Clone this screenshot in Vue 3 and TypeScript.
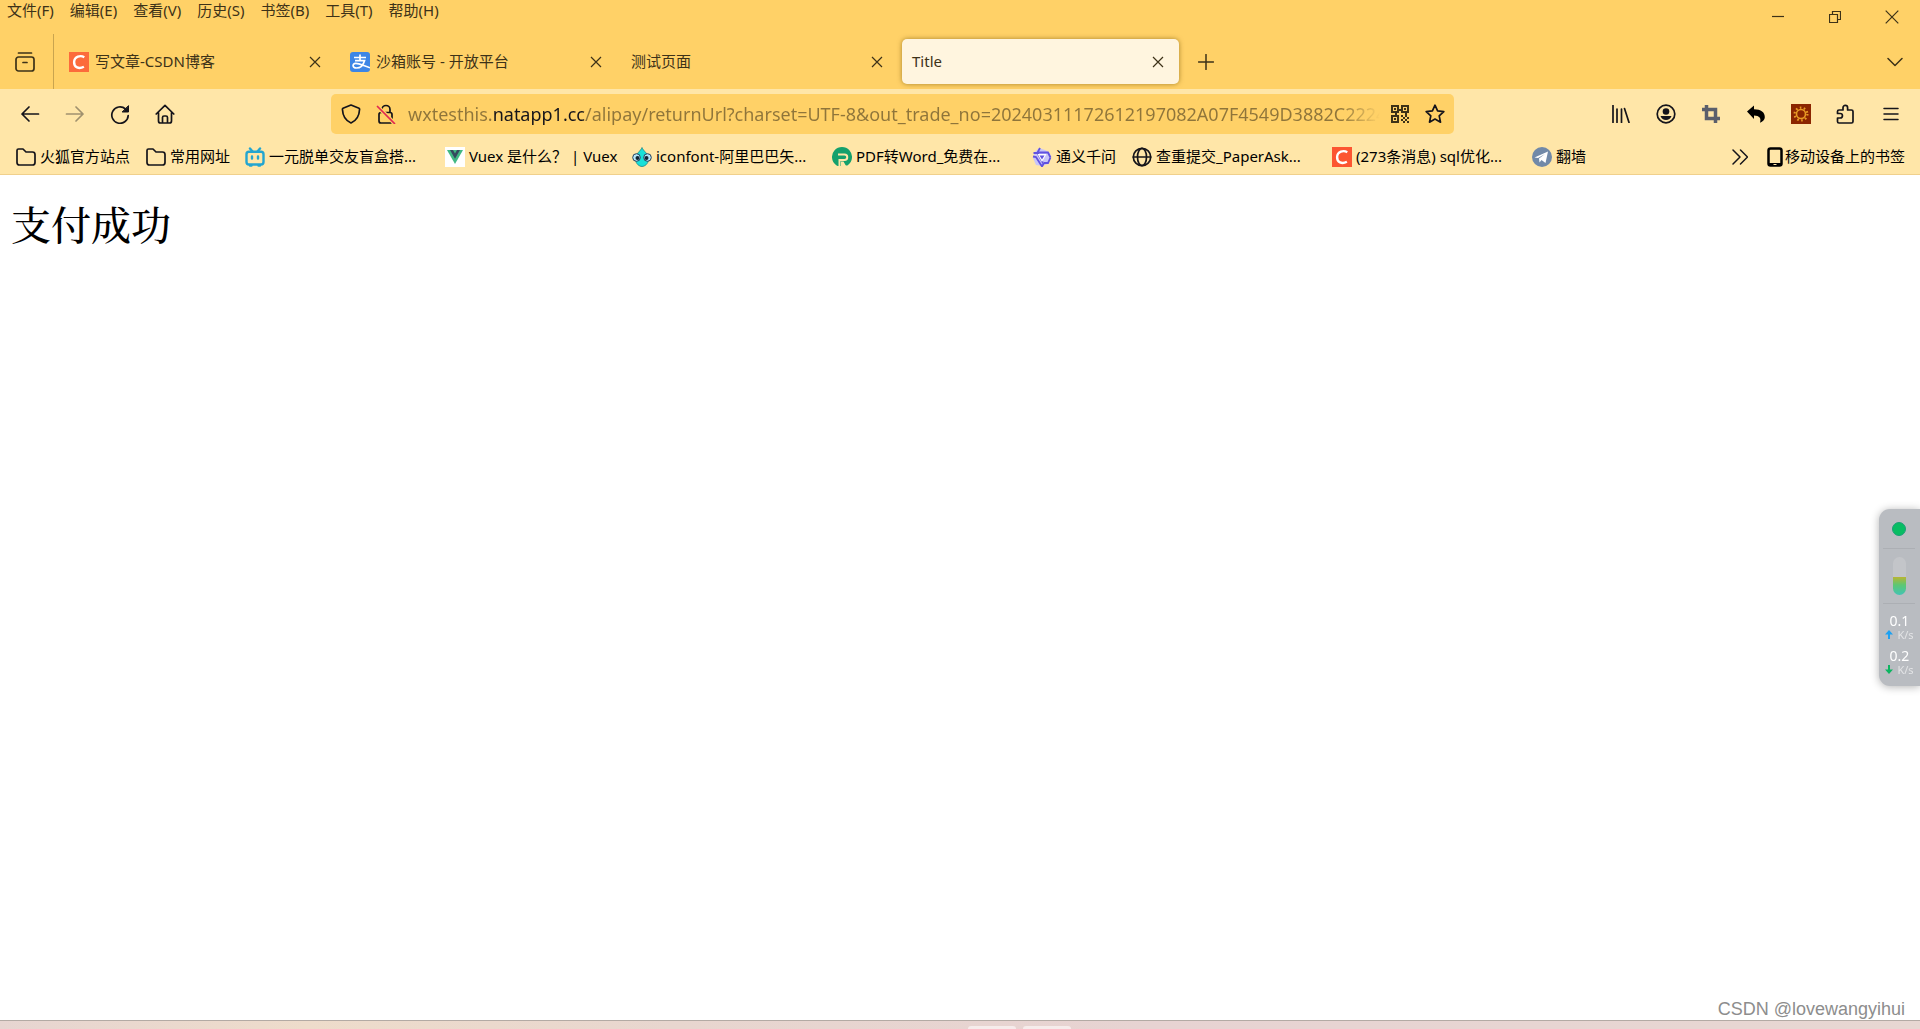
<script setup lang="ts">
import { ref } from 'vue'

interface Tab {
  title: string
  icon?: 'csdn' | 'alipay'
}

interface Bookmark {
  label: string
  icon: string
  width: number
}

const menus: string[] = ['文件(F)', '编辑(E)', '查看(V)', '历史(S)', '书签(B)', '工具(T)', '帮助(H)']

const tabs: Tab[] = [
  { title: '写文章-CSDN博客', icon: 'csdn' },
  { title: '沙箱账号 - 开放平台', icon: 'alipay' },
  { title: '测试页面' },
  { title: 'Title' },
]
const activeTab = ref(3)

const address = ref(
  'wxtesthis.natapp1.cc/alipay/returnUrl?charset=UTF-8&out_trade_no=20240311172612197082A07F4549D3882C2224F',
)

const bookmarks: Bookmark[] = [
  { label: '火狐官方站点', icon: 'folder', width: 130 },
  { label: '常用网址', icon: 'folder', width: 99 },
  { label: '一元脱单交友盲盒搭...', icon: 'bili', width: 200 },
  { label: 'Vuex 是什么？ | Vuex', icon: 'vue', width: 187 },
  { label: 'iconfont-阿里巴巴矢...', icon: 'iconfont', width: 200 },
  { label: 'PDF转Word_免费在...', icon: 'pdf', width: 200 },
  { label: '通义千问', icon: 'tongyi', width: 100 },
  { label: '查重提交_PaperAsk...', icon: 'globe', width: 200 },
  { label: '(273条消息) sql优化...', icon: 'csdn', width: 200 },
  { label: '翻墙', icon: 'plane', width: 80 },
]
</script>

<template>
  <div class="browser">
    <header class="chrome">
      <div class="titlebar">
        <nav class="menus" aria-label="菜单栏">
          <button v-for="m in menus" :key="m" class="menu">{{ m }}</button>
        </nav>
        <div class="window-controls">
          <button aria-label="最小化">
            <svg width="12" height="12" viewBox="0 0 12 12"><path d="M0 5.5h12" /></svg>
          </button>
          <button aria-label="还原">
            <svg width="12" height="12" viewBox="0 0 12 12"><path d="M.5 3.5h8v8h-8zM3.500 3.500v-3h8v8h-3" /></svg>
          </button>
          <button aria-label="关闭">
            <svg width="14" height="14" viewBox="0 0 14 14"><path d="M.7.7l12.600 12.600M13.300.7L.7 13.300" /></svg>
          </button>
        </div>
      </div>

      <div class="tabstrip">
        <button class="view-button" aria-label="最近浏览">
          <svg width="20" height="20" viewBox="0 0 20 20" class="line">
            <path d="M3.500 1h13" /><rect x="1" y="5" width="18" height="14" rx="2.500" /><path d="M8 10.500h4" />
          </svg>
        </button>
        <div class="tabs" role="tablist">
          <div
            v-for="(t, i) in tabs"
            :key="t.title"
            class="tab"
            :class="{ active: i === activeTab }"
            role="tab"
            :aria-selected="i === activeTab"
            @click="activeTab = i"
          >
            <svg v-if="t.icon === 'csdn'" class="fav" viewBox="0 0 20 20">
              <path fill="#fc6b3b" d="M0 0h20v20H0z" />
              <path fill="none" stroke="#fff" stroke-width="2.400" d="M15.300 5.200C11.500 3 5.400 4.300 5.100 10c-.2 5.500 4.800 7.300 9.800 4.800" />
            </svg>
            <svg v-else-if="t.icon === 'alipay'" class="fav" viewBox="0 0 20 20">
              <rect width="20" height="20" rx="3" fill="#3d86e6" />
              <path fill="none" stroke="#fff" stroke-width="1.700" d="M4 5.500h12M10 2.500v6M5 8.700h9.500c-1 3.500-3.500 7.300-8 7.300-4.500 0-4.300-4.500-.8-4.700 3.800-.1 8.300 2.700 14.300 4.500" />
            </svg>
            <span class="tab-title">{{ t.title }}</span>
            <button class="tab-close" aria-label="关闭标签页">
              <svg width="12" height="12" viewBox="0 0 12 12"><path d="M1 1l10 10M11 1L1 11" /></svg>
            </button>
          </div>
        </div>
        <button class="new-tab" aria-label="新建标签页">
          <svg width="16" height="16" viewBox="0 0 16 16" class="line thin"><path d="M8 .5v15M.5 8h15" /></svg>
        </button>
        <button class="all-tabs" aria-label="列出所有标签页">
          <svg width="16" height="10" viewBox="0 0 16 10" class="line thin"><path d="M1 1.500l7 7 7-7" /></svg>
        </button>
      </div>

      <div class="toolbar">
        <div class="tools">
          <button aria-label="后退">
            <svg width="20" height="20" viewBox="0 0 20 20" class="line"><path d="M18.500 10H2M9 3l-7 7 7 7" /></svg>
          </button>
          <button aria-label="前进" class="disabled">
            <svg width="20" height="20" viewBox="0 0 20 20" class="line"><path d="M1.500 10H18M11 3l7 7-7 7" /></svg>
          </button>
          <button aria-label="刷新">
            <svg width="20" height="20" viewBox="0 0 20 20" class="line">
              <path d="M18.200 11.500A8.200 8.200 0 1 1 15.500 5" /><path d="M18.500 2v6h-6z" fill="#15141a" stroke-width="1" />
            </svg>
          </button>
          <button aria-label="主页">
            <svg width="20" height="20" viewBox="0 0 20 20" class="line">
              <path d="M1.200 10L10 1.300 18.800 10M3.500 8.500V17q0 2 2 2h9q2 0 2-2V8.500M7.500 19v-5.500q0-1.500 1.500-1.500h2q1.500 0 1.500 1.500V19" />
            </svg>
          </button>
        </div>

        <div class="urlbar">
          <button aria-label="跟踪保护">
            <svg width="20" height="20" viewBox="0 0 20 20" class="line">
              <path d="M10 1l8 3.300q.6.300.6 1C18.300 11 16 16.500 10 19 4 16.500 1.700 11 1.400 5.300q0-.7.6-1z" />
            </svg>
          </button>
          <button aria-label="连接不安全">
            <svg width="20" height="20" viewBox="0 0 20 20" class="line">
              <path d="M6 8V5.500a4 4 0 0 1 8 0V8M5 8.500h9q2 0 2 2V17q0 2-2 2H5q-2 0-2-2v-6.500q0-2 2-2z" />
              <path d="M1.500 2.500l17 17" stroke="#ffd167" stroke-width="4" /><path d="M1.500 2.500l17 17" stroke="#e22850" />
            </svg>
          </button>
          <input v-model="address" type="text" aria-label="网址" spellcheck="false" />
          <button aria-label="二维码">
            <svg width="18" height="18" viewBox="0 0 18 18" class="qr">
              <path fill-rule="evenodd" d="M0 0h8v8H0zM2 2v4h4V2zM10 0h8v8h-8zM12 2v4h4V2zM0 10h8v8H0zM2 12v4h4v-4zM3 3h2v2H3zM13 3h2v2h-2zM3 13h2v2H3zM8 4h2v2H8zM4 8h2v2H4zM14 8h2v2h-2zM10 10h2v2h-2zM14 10h2v2h-2zM12 12h2v2h-2zM16 12h2v2h-2zM10 14h2v2h-2zM14 14h2v2h-2zM12 16h2v2h-2zM16 16h2v2h-2z" />
            </svg>
          </button>
          <button aria-label="收藏">
            <svg width="20" height="20" viewBox="0 0 20 20" class="line">
              <path d="M10 1.200l2.600 5.700 6.200.7-4.600 4.300 1.300 6.300-5.500-3.100-5.500 3.100 1.300-6.300L1.200 7.600l6.200-.7z" />
            </svg>
          </button>
        </div>

        <div class="tools">
          <button aria-label="书架">
            <svg width="18" height="18" viewBox="0 0 18 18" class="line"><path d="M1 .5v17M5 4v13.500M9.500 4v13.500M12.500 3.500l4.500 14" /></svg>
          </button>
          <button aria-label="账户">
            <svg width="20" height="20" viewBox="0 0 20 20" class="line">
              <circle cx="10" cy="10" r="8.800" />
              <g fill="#15141a" stroke="none"><circle cx="10" cy="7.500" r="3.300" /><path d="M4.500 12h11q-1.500 4-5.500 4t-5.500-4z" /></g>
            </svg>
          </button>
          <button aria-label="截图">
            <svg width="18" height="18" viewBox="0 0 18 18"><path fill="none" stroke="#5b5f6b" stroke-width="3.500" d="M0 4.500h13.500V18M4.500 0v13.500H18" /></svg>
          </button>
          <button aria-label="撤销">
            <svg width="18" height="18" viewBox="0 0 18 18"><path fill="#000" d="M0 6.500L7 .5v3.700c7 0 11 3 10.800 8 0 2.500-2 4.500-4.800 5.500 1.500-4.500-.5-7-6-7.200V14z" /></svg>
          </button>
          <button aria-label="扩展">
            <svg width="20" height="20" viewBox="0 0 20 20">
              <path fill="#8b2500" d="M0 0h20v20H0z" />
              <circle cx="10" cy="10" r="4.500" fill="none" stroke="#e89a24" stroke-width="1.600" />
              <circle cx="10" cy="10" r="6.400" fill="none" stroke="#e89a24" stroke-width="2.200" stroke-dasharray="1.600 2.421" />
            </svg>
          </button>
          <button aria-label="扩展管理">
            <svg width="20" height="20" viewBox="0 0 20 20" class="line">
              <path d="M3 19q-1.500 0-1.500-1.500V14h2.700a2.200 2.200 0 0 0 0-4.500H1.500V7.500Q1.500 6 3 6h4V3.700a2.300 2.300 0 0 1 4.600 0V6H15.500Q17 6 17 7.500v10q0 1.500-1.500 1.500z" />
            </svg>
          </button>
          <button aria-label="打开应用程序菜单">
            <svg width="16" height="16" viewBox="0 0 16 16" class="line thin"><path d="M1 2.500h14M1 8h14M1 13.500h14" /></svg>
          </button>
        </div>
      </div>

      <div class="bookmarks">
        <a v-for="b in bookmarks" :key="b.label" href="#" class="bookmark" :style="{ width: b.width + 'px' }">
          <svg v-if="b.icon === 'folder'" class="fav line" viewBox="0 0 20 20">
            <path d="M1 15.500v-12Q1 2 2.500 2H7l3 3h6.500Q19 5 19 7.500v8Q19 18 16.500 18h-13Q1 18 1 15.500z" />
          </svg>
          <svg v-else-if="b.icon === 'bili'" class="fav" viewBox="0 0 20 20">
            <g fill="none" stroke="#23a5d0" stroke-width="2.400" stroke-linecap="round"><rect x="1.500" y="4.800" width="17" height="12.700" rx="2.500" /><path d="M5 1.500l2.500 3M15 1.500l-2.500 3M7 9.500v2M13 9.500v2M5 18.500h1.500M13.500 18.500H15" /></g>
          </svg>
          <svg v-else-if="b.icon === 'vue'" class="fav" viewBox="0 0 20 20">
            <path fill="#fff" d="M0 0h20v20H0z" /><path fill="#41b883" d="M2 3h16l-8 14z" /><path fill="#35495e" d="M5 3h3l2 3.500L12 3h3l-5 8.700z" />
          </svg>
          <svg v-else-if="b.icon === 'iconfont'" class="fav" viewBox="0 0 20 20">
            <path fill="#18e0d8" stroke="#167b80" stroke-width=".7" d="M10 .5c1.200 3.500 6.500 6 6.500 11.500 0 5-4 7.500-6.500 7.500S3.500 17 3.500 12C3.500 6.500 8.800 4 10 .5z" />
            <g fill="#b4e6fa" stroke="#24405c" stroke-width="1"><circle cx="4.500" cy="10.500" r="3.800" /><circle cx="15.500" cy="10.500" r="3.800" /></g>
            <g fill="#123"><circle cx="5.500" cy="11" r="2" /><circle cx="14.500" cy="11" r="2" /></g>
          </svg>
          <svg v-else-if="b.icon === 'pdf'" class="fav" viewBox="0 0 20 20">
            <path fill="#15a06c" d="M4 18A10 10 0 1 1 16 18q-1.500 1-2.500 0l-2-3.500H9V19H6q-1 0-2-1z" />
            <path fill="none" stroke="#ffe6a8" stroke-width="2" d="M6 7.500h6.500a2.700 2.700 0 0 1 0 5.500H7.500v6.500" />
          </svg>
          <svg v-else-if="b.icon === 'tongyi'" class="fav" viewBox="0 0 20 20">
            <path fill="#c9c5f8" d="M7 1l6 2 5 3 1 5-3 6-6 2-6-1-3-7 2-6z" />
            <path fill="none" stroke="#6152df" stroke-width="1.800" d="M8 1L5.500 5.500H16l2.500 5M18.500 10.500L16 16h-4M12 16l-2 3.500-6-9.500-3-.5M1.500 6h4L11 16" />
            <path fill="#fff" d="M5.500 7h9L10 15z" /><path fill="#6152df" d="M7.500 8.500h5L10 12.500z" />
          </svg>
          <svg v-else-if="b.icon === 'globe'" class="fav line" viewBox="0 0 20 20">
            <circle cx="10" cy="10" r="8.700" /><ellipse cx="10" cy="10" rx="4.500" ry="8.700" /><path d="M1.300 10h17.400" />
          </svg>
          <svg v-else-if="b.icon === 'csdn'" class="fav" viewBox="0 0 20 20">
            <path fill="#fc5531" d="M0 0h20v20H0z" />
            <path fill="none" stroke="#fff" stroke-width="2.400" d="M15.300 5.200C11.500 3 5.400 4.300 5.100 10c-.2 5.500 4.800 7.300 9.800 4.800" />
          </svg>
          <svg v-else class="fav" viewBox="0 0 20 20">
            <circle cx="10" cy="10" r="10" fill="#7189a8" /><path fill="#fff" d="M2.500 10.500L16 4.500 13.500 16l-4-3-2 2.500-.5-4 6-4.500-7 4z" />
          </svg>
          <span>{{ b.label }}</span>
        </a>
        <button class="more" aria-label="更多书签">
          <svg width="16" height="16" viewBox="0 0 16 16" class="line thin"><path d="M1 1l7 7-7 7M8.500 1l7 7-7 7" /></svg>
        </button>
        <a href="#" class="mobile">
          <svg width="16" height="20" viewBox="0 0 16 20"><rect x="1.500" y="1.500" width="13" height="17" rx="2" fill="none" stroke="#000" stroke-width="2.500" /><path d="M2 16h12v3H2z" /><path fill="#ffe6a8" d="M6.500 17h3v1h-3z" /></svg>
          <span>移动设备上的书签</span>
        </a>
      </div>
    </header>

    <main class="page">
      <h1>支付成功</h1>
      <span class="watermark">CSDN @lovewangyihui</span>
    </main>

    <footer class="taskbar">
      <i class="task"></i>
      <i class="task"></i>
    </footer>

    <aside class="monitor" aria-label="网速">
      <div class="status"><i class="dot"></i></div>
      <div class="level"><i class="pill"></i></div>
      <div class="rates">
        <strong>0.1</strong>
        <small>
          <svg width="8" height="9" viewBox="0 0 8 9"><path fill="#1da1f2" d="M4 0l4 4.500H5V9H3V4.500H0z" /></svg>K/s
        </small>
        <strong>0.2</strong>
        <small>
          <svg width="8" height="9" viewBox="0 0 8 9"><path fill="#0db561" d="M4 9l4-4.500H5V0H3v4.500H0z" /></svg>K/s
        </small>
      </div>
    </aside>
  </div>
</template>

<style>
body {
  margin: 0;
  background: #fff;
}
</style>

<style scoped>
.browser {
  min-height: 100vh;
  display: flex;
  flex-direction: column;
  overflow: hidden;
  font-family: 'Noto Sans', 'Noto Sans CJK SC', sans-serif;
  font-size: 15px;
  line-height: 20px;
  color: #15141a;
}
button {
  border: 0;
  padding: 0;
  background: none;
  font: inherit;
  color: inherit;
  display: flex;
  align-items: center;
  justify-content: center;
}
a {
  color: #000;
  text-decoration: none;
}
svg {
  flex: none;
}
.line {
  fill: none;
  stroke: #15141a;
  stroke-width: 1.7;
  stroke-linecap: round;
  stroke-linejoin: round;
}
.thin {
  stroke-width: 1.5;
}
.fav {
  width: 20px;
  height: 20px;
}
.chrome {
  background: #ffd167;
}
.titlebar {
  display: flex;
  justify-content: space-between;
  height: 34px;
  color: #3d3218;
}
.menus {
  display: flex;
  gap: 16px;
  height: 20px;
  padding-left: 7px;
}
.window-controls {
  display: flex;
}
.window-controls button {
  width: 57px;
}
.window-controls svg,
.tab-close svg {
  fill: none;
  stroke: #3d3218;
  stroke-width: 1.2;
}
.tabstrip {
  display: flex;
  height: 55px;
  color: #3d3218;
}
.tabstrip .line {
  stroke: #3d3218;
}
.view-button {
  width: 54px;
  padding-right: 4px;
  border-right: 1px solid #c9a44f;
}
.tabs {
  display: flex;
  gap: 4px;
  padding: 5px 4px 5px 5px;
}
.tab {
  display: flex;
  align-items: center;
  gap: 6px;
  box-sizing: border-box;
  width: 277px;
  padding: 0 15px 0 10px;
  border-radius: 5px;
}
.tab.active {
  background: #fff5df;
  box-shadow: 0 0 5px rgba(110, 80, 0, 0.6);
}
.tab-title,
.bookmark span,
.mobile span {
  padding-bottom: 2px;
}
.tab-title {
  flex: 1;
}
.new-tab {
  width: 45px;
}
.all-tabs {
  width: 50px;
  margin-left: auto;
}
.toolbar {
  display: flex;
  align-items: center;
  height: 50px;
  padding: 0 7px;
  background: #ffe6a8;
}
.tools {
  display: flex;
}
.tools button {
  width: 45px;
  height: 40px;
}
.disabled {
  opacity: 0.4;
}
.urlbar {
  flex: 1;
  display: flex;
  min-width: 0;
  height: 40px;
  margin: 0 144px;
  padding: 0 2px;
  border-radius: 5px;
  background: #ffd167;
}
.urlbar button {
  flex: none;
  width: 35px;
}
.urlbar input {
  flex: 1;
  min-width: 0;
  border: 0;
  margin: 0 2px 0 5px;
  padding: 0;
  outline: 0;
  font: inherit;
  font-size: 18px;
  color: #8f753a;
  background: linear-gradient(90deg, #8f753a 85px, #15141a 85px, #15141a 177px, #8f753a 177px, #8f753a calc(100% - 40px), transparent);
  background-clip: text;
  -webkit-background-clip: text;
  -webkit-text-fill-color: transparent;
}
.qr {
  fill: #3d3218;
}
.bookmarks {
  display: flex;
  align-items: center;
  height: 35px;
  padding: 0 15px 0 16px;
  background: #ffe6a8;
  border-bottom: 1px solid #f0d08c;
}
.bookmark {
  display: flex;
  align-items: center;
  gap: 4px;
  white-space: nowrap;
}
.more {
  width: 20px;
  margin-left: auto;
  margin-right: 17px;
}
.mobile {
  display: flex;
  align-items: center;
  gap: 2px;
}
.page {
  position: relative;
  flex: 1;
  background: #fff;
}
h1 {
  margin: 22px 11px;
  font: 500 40px/52px 'Noto Serif CJK SC', 'Liberation Serif', serif;
  color: #000;
}
.watermark {
  position: absolute;
  right: 15px;
  bottom: 0;
  font: 18px/22px 'Liberation Sans', Arial, sans-serif;
  color: #8d8d8d;
}
.taskbar {
  display: flex;
  justify-content: center;
  gap: 7px;
  height: 8px;
  box-sizing: content-box;
  padding-left: 119px;
  border-top: 1px solid #b3aaa4;
  background: linear-gradient(90deg, #e7d5d1, #eedccb 16%, #e8d6cf 35%, #e7d3d2 60%, #e7d7d2);
}
.task {
  width: 48px;
  height: 3px;
  margin-top: 5px;
  border-radius: 3px 3px 0 0;
  background: #f6eceb;
}
.monitor {
  position: fixed;
  right: 0;
  top: 509px;
  width: 41px;
  height: 177px;
  border-radius: 11px 0 0 11px;
  background: #b9bcc1;
  box-shadow: 0 1px 8px rgba(0, 0, 0, 0.3);
  color: #fff;
}
.status,
.level {
  display: flex;
  justify-content: center;
  align-items: center;
  height: 39px;
  margin: 0 5px 0 4px;
  border-bottom: 1px solid #acafb4;
}
.level {
  height: 54px;
}
.dot {
  width: 12px;
  height: 12px;
  border: 1px solid #1c9f78;
  border-radius: 50%;
  background: #08bd63;
}
.pill {
  width: 13px;
  height: 38px;
  border-radius: 7px;
  background: linear-gradient(#c3c5c9 20px, #b8b533 20px, #5cc774 28px, #42c4b4);
}
.rates {
  display: flex;
  flex-direction: column;
  align-items: center;
  padding-top: 8px;
}
.rates strong {
  font-size: 14px;
  font-weight: 400;
  line-height: 18px;
}
.rates small {
  display: flex;
  align-items: center;
  gap: 4px;
  font-size: 11px;
  line-height: 8px;
  padding-bottom: 8px;
  color: #e3e4e6;
}
</style>
